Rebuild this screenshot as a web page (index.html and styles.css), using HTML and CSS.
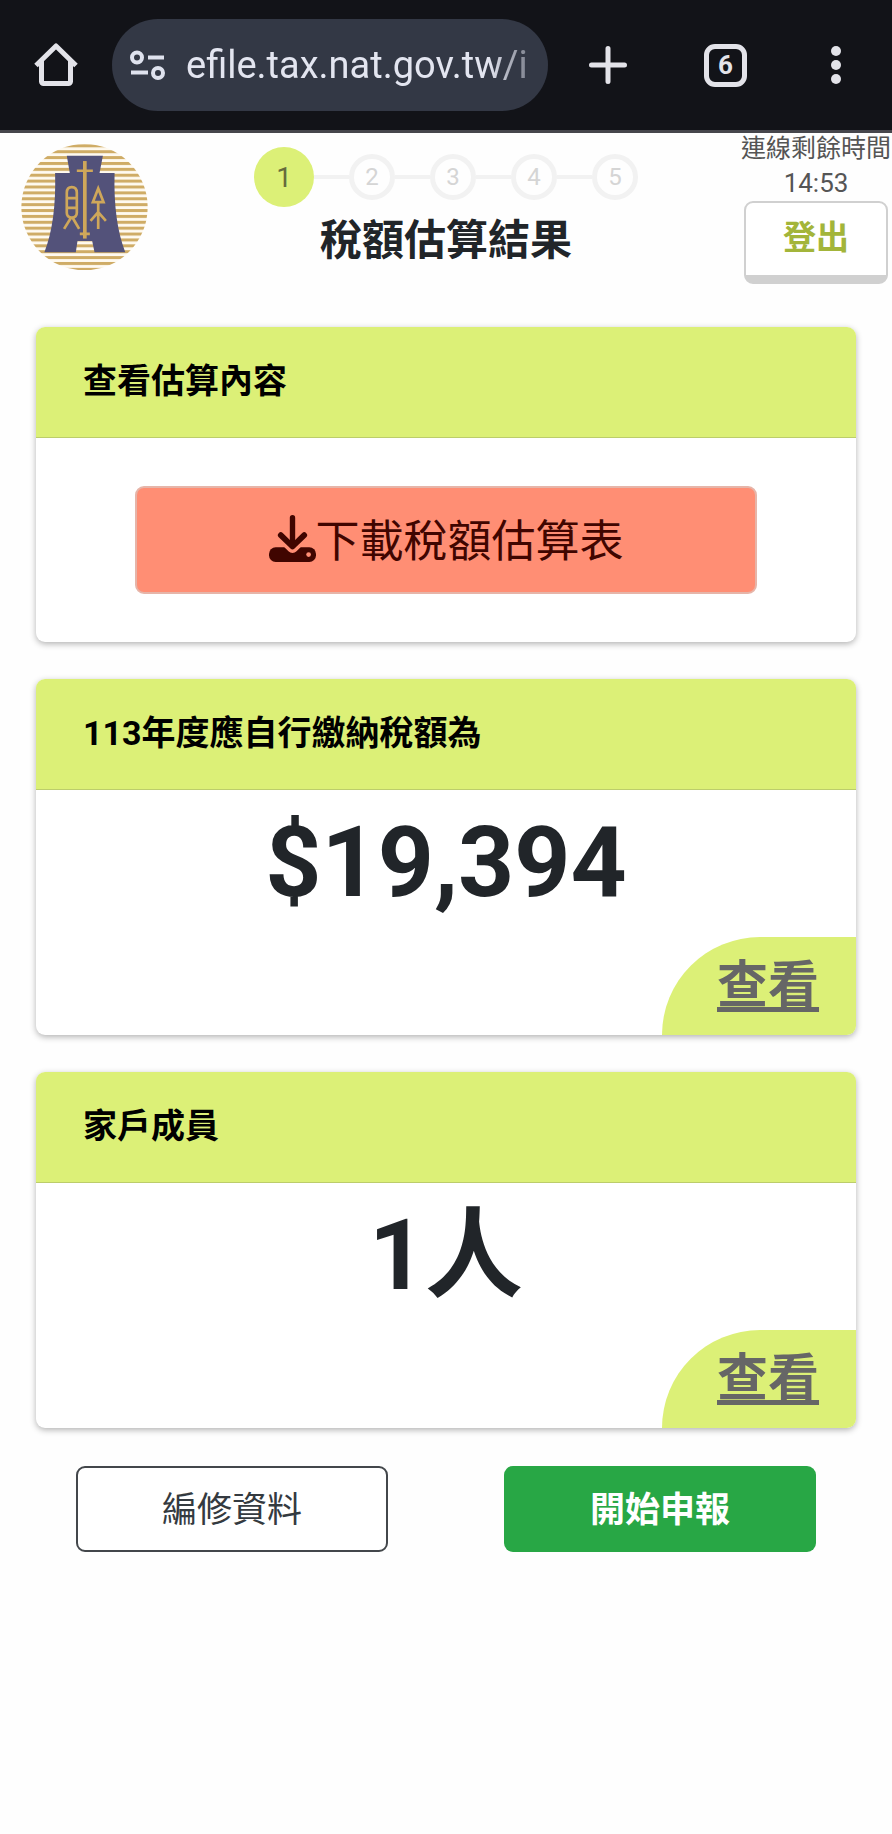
FILE: index.html
```html
<!DOCTYPE html>
<html lang="zh-Hant">
<head>
  <meta charset="UTF-8" />
  <meta name="viewport" content="width=device-width, initial-scale=1" />
  <title>稅額估算結果</title>
  <link rel="stylesheet" href="styles.css">
</head>
<body>

  <!-- browser bar -->
  <div class="browser-bar">
    <button class="bar-btn" aria-label="Home">
      <svg width="44" height="44" viewBox="0 0 44 44" fill="none" stroke="#e3e3e9" stroke-width="5" stroke-linejoin="round">
        <path d="M2 22.500L22 3l20 19.500"/>
        <path d="M7.500 18v20.500a2 2 0 0 0 2 2h25a2 2 0 0 0 2-2V18"/>
      </svg>
    </button>
    <div class="url-box">
      <svg width="36" height="30" viewBox="0 0 36 30" fill="none" stroke="#dfe2ee" stroke-width="4">
        <circle cx="7" cy="7.500" r="5"/>
        <path d="M18 7.500h16M1 22.500h17"/>
        <circle cx="28" cy="23" r="5"/>
      </svg>
      <span class="url">efile.tax.nat.gov.tw/i</span>
    </div>
    <div class="bar-tools">
      <button class="bar-btn" aria-label="New tab">
        <svg width="38" height="38" viewBox="0 0 38 38" stroke="#e3e3e9" stroke-width="5" stroke-linecap="round">
          <path d="M19 2.500v33M2.500 19h33"/>
        </svg>
      </button>
      <button class="bar-btn tabs" aria-label="Tabs">6</button>
      <button class="bar-btn" aria-label="Menu">
        <svg width="24" height="38" viewBox="0 0 24 38" fill="#e3e3e9">
          <circle cx="12" cy="5" r="5"/>
          <circle cx="12" cy="19" r="5"/>
          <circle cx="12" cy="33" r="5"/>
        </svg>
      </button>
    </div>
  </div>

  <header class="header">
    <svg class="logo" viewBox="63 42 380 378" role="img" aria-label="財政部">
      <defs>
        <pattern id="stripes" x="0" y="43" width="20" height="17.600" patternUnits="userSpaceOnUse">
          <rect width="20" height="17.600" fill="#fffaf0"/>
          <rect width="20" height="9" fill="#cfac66"/>
        </pattern>
      </defs>
      <circle cx="253" cy="231" r="189" fill="url(#stripes)"/>
      <path d="M200 77h108l-10 52h45q-4 145 32 237h-92l-7-34h-44l-5 34h-94q36-92 32-237h44z" fill="#53527a"/>
      <g fill="none" stroke="#cfa75a" stroke-width="8">
        <path d="M254 93v232" stroke-width="11"/>
        <path d="M230 122h48M239 311h30"/>
        <path d="M200 248v-60q0-17 15-17t15 17v60q0 14-15 14t-15-14zM200 204h30M200 233h30M213 262l-21 34M217 262l20 34"/>
        <path d="M294 175l-16 41h32zM294 216v80M294 246l-23 26M294 246l23 26"/>
      </g>
    </svg>

    <div class="progress">
      <ol class="steps">
        <li class="step active">1</li>
        <li class="step">2</li>
        <li class="step">3</li>
        <li class="step">4</li>
        <li class="step">5</li>
      </ol>
      <h1>稅額估算結果</h1>
    </div>

    <div class="session">
      <div class="session-label">連線剩餘時間</div>
      <div class="session-time">14:53</div>
      <button class="logout">登出</button>
    </div>
  </header>

  <main class="container">
    <section class="card">
      <h2>查看估算內容</h2>
      <div class="download">
        <button class="download-btn">
          <svg width="47" height="47" viewBox="0 0 140 140" fill="none" stroke-linecap="round" stroke-linejoin="round">
            <rect x="0" y="96" width="140" height="44" rx="20" fill="#400500"/>
            <path d="M34 60l36 36 36-36" stroke="#ff8e74" stroke-width="34"/>
            <path d="M70 8v84" stroke="#400500" stroke-width="16"/>
            <path d="M35 60l35 34 35-34" stroke="#400500" stroke-width="17"/>
            <circle cx="118" cy="118" r="7" fill="#ff8e74"/>
          </svg>
          <span>下載稅額估算表</span>
        </button>
      </div>
    </section>

    <section class="card">
      <h2>113年度應自行繳納稅額為</h2>
      <p class="value">$19,394</p>
      <a class="view" href="#">查看</a>
    </section>

    <section class="card">
      <h2>家戶成員</h2>
      <p class="value">1人</p>
      <a class="view" href="#">查看</a>
    </section>

    <div class="actions">
      <button class="edit-btn">編修資料</button>
      <button class="start-btn">開始申報</button>
    </div>
  </main>

</body>
</html>
```
FILE: styles.css
```css
* {
  box-sizing: border-box;
}
body {
  margin: 0;
  background: #fefefe;
  color: #212529;
  font-family: Roboto, 'Noto Sans CJK TC', sans-serif;
}
button {
  font-family: inherit;
  cursor: pointer;
}
svg {
  display: block;
  flex-shrink: 0;
}

/* browser bar */
.browser-bar {
  display: flex;
  align-items: center;
  height: 133px;
  padding: 0 44px 0 34px;
  background: #121318;
  border-bottom: 3px solid #46464c;
}
.bar-btn {
  padding: 0;
  border: none;
  background: none;
  color: #e3e3e9;
}
.url-box {
  display: flex;
  flex: 1;
  align-items: center;
  gap: 20px;
  min-width: 0;
  height: 92px;
  margin: 0 41px 0 34px;
  padding: 0 18px;
  border-radius: 46px;
  background: #333845;
}
.url {
  flex: 1;
  overflow: hidden;
  white-space: nowrap;
  font-size: 38px;
  line-height: 52px;
  color: #e3e5f0;
  -webkit-mask-image: linear-gradient(to right, #000 88%, rgba(0, 0, 0, 0.4));
  mask-image: linear-gradient(to right, #000 88%, rgba(0, 0, 0, 0.4));
}
.bar-tools {
  display: flex;
  align-items: center;
  gap: 77px;
}
.tabs {
  width: 43px;
  height: 43px;
  border: 5px solid #e3e3e9;
  border-radius: 11px;
  font-size: 26px;
  font-weight: bold;
  line-height: 32px;
}

/* page header */
.header {
  display: grid;
  grid-template-columns: 1fr auto 1fr;
  align-items: start;
}
.logo {
  width: 127px;
  margin: 11px 0 0 21px;
}
.progress {
  padding-top: 14px;
}
.steps {
  display: flex;
  align-items: center;
  margin: 0;
  padding: 0;
  list-style: none;
}
.step {
  display: flex;
  align-items: center;
  justify-content: center;
  width: 46px;
  height: 46px;
  border: 5px solid #f2f2f2;
  border-radius: 50%;
  font-size: 24px;
  color: #d5d5d5;
  position: relative;
}
.step + .step {
  margin-left: 35px;
}
/* line back to the previous step */
.step + .step::before {
  content: "";
  position: absolute;
  right: 41px;
  width: 35px;
  height: 4px;
  background: #f2f2f2;
}
.step.active {
  width: 60px;
  height: 60px;
  border: none;
  background: #dcf077;
  font-size: 28px;
  color: #666b3c;
}
h1 {
  margin: 0;
  text-align: center;
  font-size: 42px;
  line-height: 68px;
}
.session {
  justify-self: end;
  width: 152px;
  text-align: center;
  color: #555;
}
.session-label {
  font-size: 25px;
  line-height: 32px;
  white-space: nowrap;
}
.session-time {
  font-size: 26px;
  line-height: 36px;
}
.logout {
  width: 144px;
  height: 83px;
  padding: 0 0 8px;
  border: 2px solid #d0d0d0;
  border-bottom-width: 9px;
  border-radius: 9px;
  background: #fff;
  font-size: 33px;
  font-weight: bold;
  color: #a3b53a;
}

/* cards */
.container {
  padding: 43px 36px 0;
}
.card {
  display: flex;
  flex-direction: column;
  margin-bottom: 37px;
  border-radius: 9px;
  background: #fff;
  box-shadow: 0 2px 6px rgba(0, 0, 0, 0.3);
  overflow: hidden;
}
h2 {
  margin: 0;
  padding: 29px 47px 30px;
  border-bottom: 1px solid #bccd6b;
  background: #dcf077;
  font-size: 34px;
  line-height: 51px;
  color: #000;
}
.download {
  padding: 48px 99px;
}
.download-btn {
  display: flex;
  align-items: center;
  justify-content: center;
  width: 100%;
  height: 108px;
  padding: 0 0 4px;
  border: 2px solid #e6b5a9;
  border-radius: 9px;
  background: #ff8e74;
  font-size: 44px;
  color: #400500;
}
.value {
  margin: 0;
  padding: 13px 0 14px;
  text-align: center;
  font-size: 98px;
  font-weight: bold;
  line-height: 120px;
}
.view {
  align-self: flex-end;
  width: 194px;
  height: 98px;
  padding-left: 55px;
  border-top-left-radius: 98px;
  background: #dcf077;
  font-size: 51px;
  font-weight: bold;
  line-height: 98px;
  color: #666;
  text-decoration: underline;
  text-decoration-thickness: 5px;
  text-underline-offset: 4px;
  text-decoration-skip-ink: none;
}

/* bottom buttons */
.actions {
  display: grid;
  grid-template-columns: 1fr 1fr;
  gap: 116px;
  padding: 1px 40px 40px;
}
.edit-btn,
.start-btn {
  height: 86px;
  padding: 0 0 6px;
  border-radius: 9px;
  font-size: 35px;
}
.edit-btn {
  border: 2px solid #43474b;
  background: #fff;
  color: #343a40;
}
.start-btn {
  border: none;
  background: #28a745;
  color: #fff;
  font-weight: bold;
}
```
